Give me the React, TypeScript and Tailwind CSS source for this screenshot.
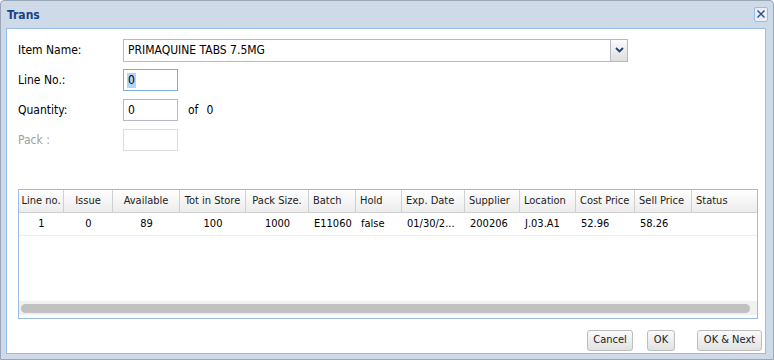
const font = "font-['DejaVu_Sans_Condensed','DejaVu_Sans',Tahoma,sans-serif]";

type Col = { title: string; w: string; align: "center" | "left" };

const cols: Col[] = [
  { title: "Line no.", w: "w-[45px]", align: "center" },
  { title: "Issue", w: "w-[49px]", align: "center" },
  { title: "Available", w: "w-[67px]", align: "center" },
  { title: "Tot in Store", w: "w-[66px]", align: "center" },
  { title: "Pack Size.", w: "w-[63px]", align: "center" },
  { title: "Batch", w: "w-[47px]", align: "left" },
  { title: "Hold", w: "w-[46px]", align: "left" },
  { title: "Exp. Date", w: "w-[63px]", align: "left" },
  { title: "Supplier", w: "w-[55px]", align: "left" },
  { title: "Location", w: "w-[56px]", align: "left" },
  { title: "Cost Price", w: "w-[59px]", align: "left" },
  { title: "Sell Price", w: "w-[57px]", align: "left" },
  { title: "Status", w: "flex-1", align: "left" },
];

const row = ["1", "0", "89", "100", "1000", "E11060", "false", "01/30/2...", "200206", "J.03.A1", "52.96", "58.26", ""];

const Field = ({ label, children, disabled }: { label: string; children: React.ReactNode; disabled?: boolean }) => (
  <div className="flex items-center h-[22px]">
    <div className={`w-[105px] ${disabled ? "text-[#a0a0a0]" : "text-black"}`}>{label}</div>
    {children}
  </div>
);

const Btn = ({ label, w }: { label: string; w: string }) => (
  <div className={`${w} h-[21px] flex items-center justify-center border border-[#bdbdbd] rounded-[3px] bg-gradient-to-b from-[#fafafa] to-[#e2e2e2] text-[#222] text-[11px]`}>
    {label}
  </div>
);

export default function App() {
  return (
    <div className={`${font} text-[12px] w-[774px] h-[360px] bg-[#cedae7] border border-[#9aa7b8] rounded-t-[4px] flex flex-col pl-[5px] pr-[7px] pb-[5px]`}>
      <div className="h-[27px] flex items-center justify-between pl-[1px]">
        <span className="font-bold text-[#15428b] text-[12px]">Trans</span>
        <div className="w-[14px] h-[15px] mr-[-2px] mt-[-1px] border border-[#99bbe8] bg-[#e8eef6] rounded-[2px] flex items-center justify-center">
          <svg width="10" height="10" viewBox="0 0 10 10">
            <path d="M1.5 1.5 L8.5 8.5 M8.5 1.5 L1.5 8.5" stroke="#2a4f86" strokeWidth="1.4" />
          </svg>
        </div>
      </div>
      <div className="flex-1 bg-white border border-[#99bbe8] flex flex-col pl-[11px] pr-[1px] pt-[10px]">
        <div className="flex flex-col gap-[8px]">
          <Field label="Item Name:">
            <div className="w-[505px] h-[23px] flex border border-[#b5b8c8]">
              <div className="flex-1 flex items-center pl-[4px] text-black">PRIMAQUINE TABS 7.5MG</div>
              <div className="w-[17px] border-l border-[#b5b8c8] bg-gradient-to-b from-[#fbfbfb] to-[#dedede] flex items-center justify-center">
                <svg width="9" height="6" viewBox="0 0 9 6">
                  <path d="M1 1 L4.5 4.5 L8 1" stroke="#1f3f78" strokeWidth="1.8" fill="none" />
                </svg>
              </div>
            </div>
          </Field>
          <Field label="Line No.:">
            <div className="w-[55px] h-[22px] border border-[#7eadd9] flex items-center pl-[3px]">
              <span className="bg-[#b3d4fc] px-[1px] leading-[15px]">0</span>
            </div>
          </Field>
          <Field label="Quantity:">
            <div className="w-[55px] h-[22px] border border-[#b5b8c8] flex items-center pl-[4px]">0</div>
            <span className="ml-[10px]">of</span>
            <span className="ml-[8px]">0</span>
          </Field>
          <Field label="Pack :" disabled>
            <div className="w-[55px] h-[22px] border border-[#dcdcdc]" />
          </Field>
        </div>

        <div className="mt-[38px] w-[740px] h-[130px] border border-[#99bbe8] flex flex-col text-[11px]">
          <div className="h-[23px] flex bg-gradient-to-b from-white to-[#ececec] border-b border-[#d0d0d0] text-[#222]">
            {cols.map((c, i) => (
              <div
                key={i}
                className={`${c.w} flex items-center px-[4px] ${c.align === "center" ? "justify-center" : "justify-start"} ${i < cols.length - 1 ? "border-r border-[#d0d0d0]" : ""} whitespace-nowrap overflow-hidden`}
              >
                {c.title}
              </div>
            ))}
          </div>
          <div className="h-[23px] flex border-b border-[#ededed] text-black">
            {cols.map((c, i) => (
              <div
                key={i}
                className={`${c.w} flex items-center px-[5px] ${c.align === "center" ? "justify-center" : "justify-start"} whitespace-nowrap overflow-hidden`}
              >
                {row[i]}
              </div>
            ))}
          </div>
          <div className="flex-1" />
          <div className="h-[14px] bg-[#f1f1f1] flex items-center px-[2px] mb-[3px]">
            <div className="w-[729px] h-[9px] rounded-full bg-[#c1c1c1]" />
          </div>
        </div>

        <div className="flex justify-end items-center mt-[11px] pr-[2px]">
          <Btn label="Cancel" w="w-[46px]" />
          <div className="ml-[14px]"><Btn label="OK" w="w-[28px]" /></div>
          <div className="ml-[22px]"><Btn label="OK & Next" w="w-[65px]" /></div>
        </div>
      </div>
    </div>
  );
}
